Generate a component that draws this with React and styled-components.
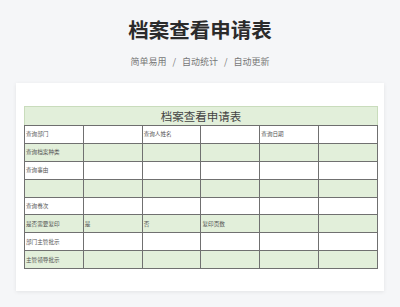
import React from 'react';
import styled, { createGlobalStyle } from 'styled-components';

const GlobalStyle = createGlobalStyle`
  html, body {
    margin: 0;
    padding: 0;
    background: #f5f6f8;
    font-family: "Noto Sans CJK SC", "Noto Sans", sans-serif;
  }
`;

const Page = styled.div`
  width: 400px;
  height: 307px;
  overflow: hidden;
  display: flex;
  flex-direction: column;
  align-items: center;
`;

const Heading = styled.h1`
  margin: 15px 0 0;
  font-size: 20.5px;
  line-height: 28px;
  font-weight: 700;
  color: #2b2b2b;
`;

const Subtitle = styled.div`
  margin-top: 13px;
  display: flex;
  gap: 6px;
  font-size: 9px;
  line-height: 12px;
  color: #777;
`;

const Card = styled.div`
  margin-top: 15px;
  width: 368px;
  height: 208px;
  background: #fff;
  box-shadow: 0 1px 4px rgba(0, 0, 0, 0.08);
  box-sizing: border-box;
  padding: 23px 6px 0 8px;
`;

const Sheet = styled.table`
  width: 354px;
  border-collapse: collapse;
  table-layout: fixed;
`;

const TitleCell = styled.td`
  height: 18px;
  padding: 0;
  background: #e2efda;
  border: 1px solid #c9dcbc;
  border-bottom: 1px solid #6e6e6e;
  text-align: center;
  font-size: 11.5px;
  color: #444;
  line-height: 18px;
`;

const Row = styled.tr`
  background: ${p => (p.$green ? '#e2efda' : '#fff')};
`;

const Cell = styled.td`
  height: 16.9px;
  padding: 0 0 0 1px;
  border: 1px solid #707070;
  font-size: 5.6px;
  color: #555;
  white-space: nowrap;
  overflow: hidden;
  vertical-align: middle;
`;

const rows = [
  ['查询部门', '', '查询人姓名', '', '查询日期', ''],
  ['查询档案种类', '', '', '', '', ''],
  ['查询事由', '', '', '', '', ''],
  ['', '', '', '', '', ''],
  ['查询卷次', '', '', '', '', ''],
  ['是否需要复印', '是', '否', '复印页数', '', ''],
  ['部门主管批示', '', '', '', '', ''],
  ['主管领导批示', '', '', '', '', ''],
];

export default function App() {
  return (
    <Page>
      <GlobalStyle />
      <Heading>档案查看申请表</Heading>
      <Subtitle>
        <span>简单易用</span>
        <span>/</span>
        <span>自动统计</span>
        <span>/</span>
        <span>自动更新</span>
      </Subtitle>
      <Card>
        <Sheet>
          <tbody>
            <tr>
              <TitleCell colSpan={6}>档案查看申请表</TitleCell>
            </tr>
            {rows.map((r, i) => (
              <Row key={i} $green={i % 2 === 1}>
                {r.map((c, j) => (
                  <Cell key={j}>{c}</Cell>
                ))}
              </Row>
            ))}
          </tbody>
        </Sheet>
      </Card>
    </Page>
  );
}
